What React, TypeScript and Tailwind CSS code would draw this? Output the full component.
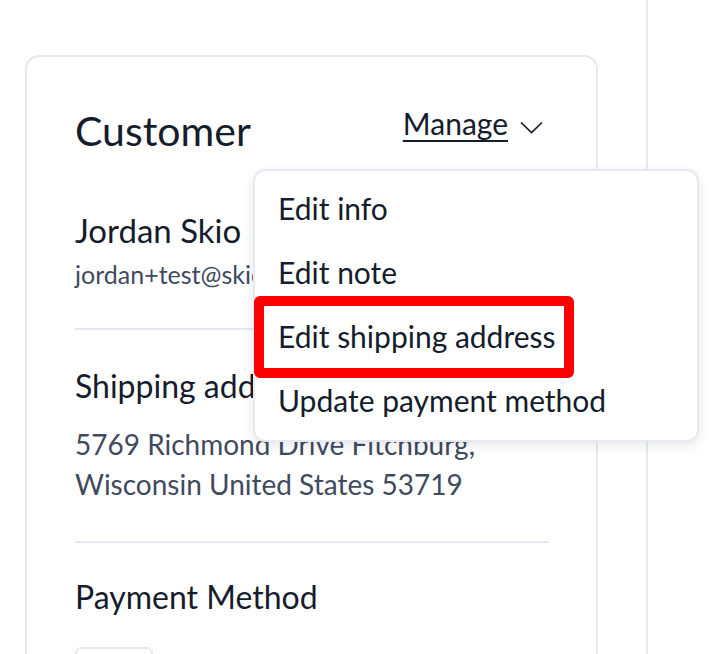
import React from "react";

export default function App() {
  const font = { fontFamily: '"Lato", "Open Sans", sans-serif' };
  return (
    <div className="relative w-[714px] h-[654px] overflow-hidden bg-white text-[#151c2c]" style={font}>
      <div className="flex h-full">
        <div className="w-[648px] h-full border-r-2 border-[#e6e9f2] pl-[25px] pt-[55px]">
          <div className="relative w-[573px] h-[700px] rounded-[14px] border-2 border-[#e6e9f2] pl-[48px] pr-[47px] pt-[43px]">
            <div className="flex items-start justify-between">
              <h2 className="mt-[7px] text-[41px] leading-[48px]">Customer</h2>
              <div className="mt-[3px] mr-[6px] flex items-start gap-[12px] text-[30px] leading-[40px]">
                <span className="underline underline-offset-[5px] decoration-[2px]">Manage</span>
                <svg className="mt-[18px]" width="23" height="13" viewBox="0 0 23 13" fill="none" stroke="#151c2c" strokeWidth="1.7">
                  <path d="M1 1.5 L11.5 11.5 L22 1.5" />
                </svg>
              </div>
            </div>
            <div className="mt-[55px] text-[33px] leading-[40px]">Jordan Skio</div>
            <div className="mt-[7px] text-[25px] leading-[34px] text-[#3f4a5e]">jordan+test@skio.com</div>
            <div className="mt-[37px] border-t-2 border-[#e6e9f2]" />
            <div className="mt-[36px] text-[32px] leading-[40px]">Shipping address</div>
            <div className="mt-[18px] text-[28px] leading-[40px] text-[#3f4a5e]">
              5769 Richmond Drive Fitchburg,
              <br />
              Wisconsin United States 53719
            </div>
            <div className="mt-[37px] border-t-2 border-[#e6e9f2]" />
            <div className="mt-[34px] text-[32px] leading-[40px]">Payment Method</div>
            <div className="mt-[30px] w-[78px] h-[40px] rounded-[6px] border-2 border-[#e6e9f2]" />

            <div className="absolute left-[226px] top-[112px] w-[446px] h-[273px] rounded-[12px] border-2 border-[#e6e9f2] bg-white shadow-[0_4px_12px_rgba(20,30,60,0.10)] pl-[23px] pt-[5px]">
              <div className="h-[64px] text-[30px] leading-[64px]">Edit info</div>
              <div className="h-[64px] text-[30px] leading-[64px]">Edit note</div>
              <div className="h-[64px] text-[30px] leading-[64px]">Edit shipping address</div>
              <div className="h-[64px] text-[30px] leading-[64px]">Update payment method</div>
              <div className="absolute left-[-1px] top-[125px] w-[320px] h-[82px] rounded-[6px] border-[10px] border-[#ff0000]" />
            </div>
          </div>
        </div>
      </div>
    </div>
  );
}
